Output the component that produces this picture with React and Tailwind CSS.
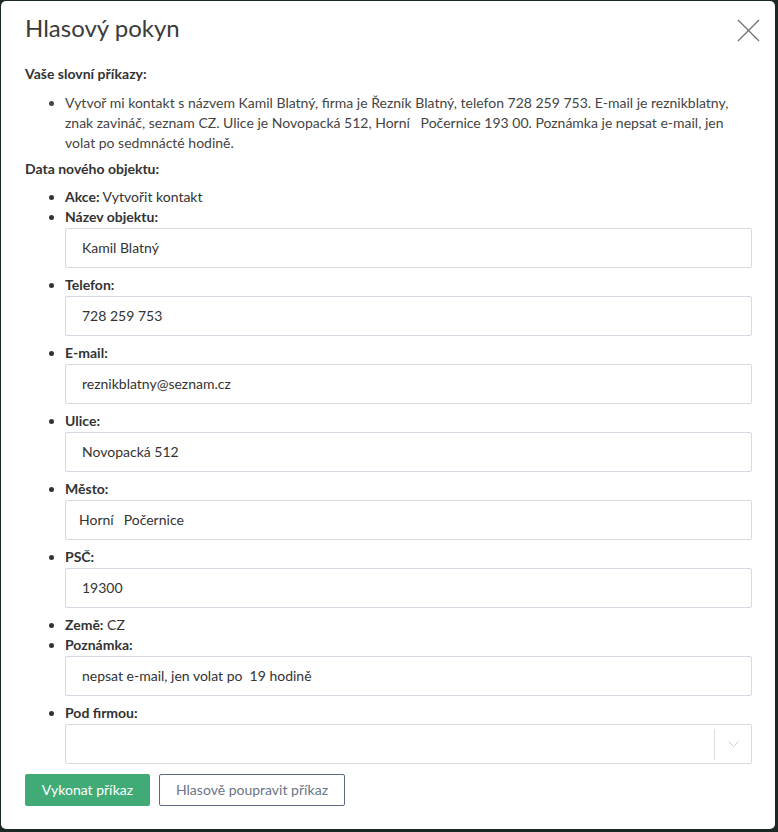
import React from "react";

const Field = ({ label, value, textClass = "pl-4" }) => (
  <li className="mt-[7px]">
    <div className="font-bold h-5 leading-5">{label}</div>
    <div className={`h-10 mt-px border border-[#d5d9e1] rounded-[2px] flex items-center text-[#333] ${textClass}`}>
      {value}
    </div>
  </li>
);

export default function App() {
  return (
    <div className="w-[778px] h-[832px] bg-[#1c2824] pt-[1px] pl-[1px]" style={{ fontFamily: "Lato, 'Noto Sans', sans-serif" }}>
      <div className="w-[774px] h-[828px] bg-white rounded-[5px] relative text-[14px] leading-5 text-[#3a3a3a]">
        <div className="pl-6 pt-[13px] h-[63px]">
          <h1 className="text-[24px] leading-7 font-normal text-[#3b3b3b]">Hlasový pokyn</h1>
        </div>
        <button className="absolute left-[736px] top-[18px] w-[23px] h-[23px]">
          <svg width="23" height="23" viewBox="0 0 23 23">
            <path d="M1 1 L22 22 M22 1 L1 22" stroke="#6e6e6e" strokeWidth="1.2" fill="none" />
          </svg>
        </button>
        <div className="pl-6 pr-[23px]">
          <div className="font-bold text-[#333]">Vaše slovní příkazy:</div>
          <ul className="list-disc pl-10 mt-[9px] text-[#444]">
            <li>
              Vytvoř mi kontakt s názvem Kamil Blatný, firma je Řezník Blatný, telefon 728 259 753. E-mail je reznikblatny, znak zavináč, seznam CZ. Ulice je Novopacká 512, Horní&nbsp;&nbsp; Počernice 193 00. Poznámka je nepsat e-mail, jen volat po sedmnácté hodině.
            </li>
          </ul>
          <div className="font-bold text-[#333] mt-[6px]">Data nového objektu:</div>
          <ul className="list-disc pl-10 mt-2 text-[#333]">
            <li>
              <span className="font-bold">Akce:</span> Vytvořit kontakt
            </li>
            <li>
              <div className="font-bold h-5 leading-5">Název objektu:</div>
              <div className="h-10 mt-px border border-[#d5d9e1] rounded-[2px] flex items-center pl-4">Kamil Blatný</div>
            </li>
            <Field label="Telefon:" value="728 259 753" />
            <Field label="E-mail:" value="reznikblatny@seznam.cz" />
            <Field label="Ulice:" value="Novopacká 512" />
            <Field
              label="Město:"
              value={
                <span>
                  Horní<span className="ml-[10px]">Počernice</span>
                </span>
              }
              textClass="pl-[13px]"
            />
            <Field label="PSČ:" value="19300" />
            <li className="mt-[7px]">
              <span className="font-bold">Země:</span> CZ
            </li>
            <li>
              <div className="font-bold h-5 leading-5">Poznámka:</div>
              <div className="h-10 mt-px border border-[#d5d9e1] rounded-[2px] flex items-center pl-4">nepsat e-mail, jen volat po&nbsp; 19 hodině</div>
            </li>
            <li className="mt-[7px]">
              <div className="font-bold h-5 leading-5">Pod firmou:</div>
              <div className="h-10 mt-px border border-[#d5d9e1] rounded-[2px] flex items-center justify-end">
                <div className="w-px h-[31px] bg-[#d9dce3]"></div>
                <div className="w-9 flex items-center justify-center">
                  <svg width="11" height="7" viewBox="0 0 11 7">
                    <path d="M0.5 0.5 L5.5 5.5 L10.5 0.5" stroke="#c9ccd4" strokeWidth="1" fill="none" />
                  </svg>
                </div>
              </div>
            </li>
          </ul>
          <div className="flex gap-[9px] mt-[10px]">
            <button className="h-8 w-[125px] bg-[#41ab78] text-white rounded-[2px] text-[14px]">Vykonat příkaz</button>
            <button className="h-8 w-[186px] border border-[#5d6b86] text-[#697487] rounded-[2px] text-[14px] bg-white">Hlasově poupravit příkaz</button>
          </div>
        </div>
      </div>
    </div>
  );
}
